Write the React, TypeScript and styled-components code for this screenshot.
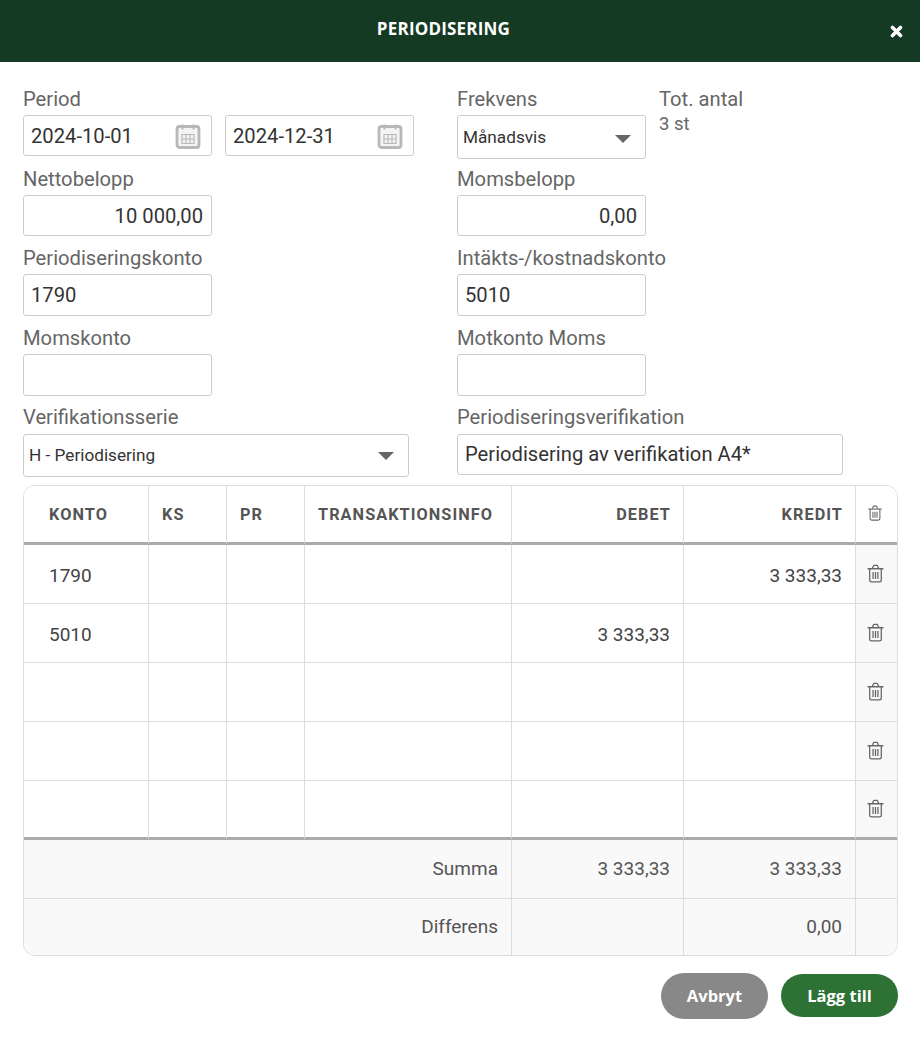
import React from "react";
import styled, { createGlobalStyle } from "styled-components";

const Global = createGlobalStyle`
  html, body { margin: 0; padding: 0; background: #fff; }
  body { font-family: Roboto, "Liberation Sans", sans-serif; color: #333; }
  * { box-sizing: border-box; }
`;

const Page = styled.div`
  width: 920px;
  height: 1049px;
  background: #fff;
  overflow: hidden;
`;

const Header = styled.header`
  position: relative;
  height: 62px;
  background: #153a24;
  display: flex;
  align-items: center;
  justify-content: center;
  padding: 0 33px 4px 0;
`;

const Title = styled.h1`
  margin: 0;
  font: 700 17px/20px "Open Sans", sans-serif;
  letter-spacing: 0.2px;
  color: #fff;
`;

const CloseIcon = styled.svg`
  position: absolute;
  left: 890px;
  top: 25px;
  width: 13px;
  height: 13px;
`;

const Form = styled.div`
  display: grid;
  grid-template-columns: 434px 441px;
  grid-template-rows: 80px 79px 80px 80px 79px;
  padding: 26px 0 0 23px;
  height: 423px;
`;

const Field = styled.div`
  display: flex;
  flex-direction: column;
`;

const FieldRow = styled.div`
  display: flex;
  gap: 13px;
`;

const Label = styled.label<{ $tight?: boolean }>`
  display: block;
  font-size: 20.2px;
  line-height: ${(p) => (p.$tight ? 20 : 22)}px;
  height: 27px;
  color: #666;
`;

const InputBox = styled.div<{ $w?: number; $right?: boolean; $h?: number; $lift?: boolean }>`
  width: ${(p) => p.$w ?? 189}px;
  height: ${(p) => p.$h ?? 41}px;
  border: 1px solid #ccc;
  border-radius: 3px;
  background: #fff;
  display: flex;
  align-items: center;
  justify-content: ${(p) => (p.$right ? "flex-end" : "space-between")};
  padding: 0 8px ${(p) => (p.$lift ? 2 : 0)}px 7px;
  font-size: 20.2px;
  color: #333;
  flex: none;
`;

const SelectBox = styled(InputBox)`
  font-size: 17.2px;
  padding: 0 13px ${(p) => (p.$lift ? 2 : 0)}px 5px;
  color: #333;
`;

const Caret = styled.span`
  width: 0;
  height: 0;
  border-left: 8px solid transparent;
  border-right: 8px solid transparent;
  border-top: 8px solid #666;
  margin-top: 3px;
  margin-right: 1px;
`;

const Count = styled.div`
  font-size: 18.5px;
  line-height: 20px;
  color: #666;
  margin-top: -1px;
`;

const CalendarIcon = styled.svg`
  width: 26px;
  height: 26px;
  margin-right: 2px;
  flex: none;
`;

const TableWrap = styled.div`
  width: 875px;
  height: 471px;
  margin-left: 23px;
  border: 1px solid #ddd;
  border-radius: 12px;
  overflow: hidden;
`;

const Table = styled.table`
  width: 873px;
  table-layout: fixed;
  border-collapse: separate;
  border-spacing: 0;
  color: #444;
  font-size: 19px;
`;

const HeadCell = styled.th<{ $right?: boolean; $pl?: number }>`
  height: 59px;
  border-right: 1px solid #ddd;
  border-bottom: 3px solid #aaa;
  padding: 0 ${(p) => (p.$right ? 12 : 13)}px 0 ${(p) => p.$pl ?? 13}px;
  text-align: ${(p) => (p.$right ? "right" : "left")};
  font-size: 16.3px;
  font-weight: 700;
  letter-spacing: 1.05px;
  color: #555;
  background: #fff;
  &:last-child { border-right: 0; padding: 0 4px 4px 0; text-align: center; }
`;

const Cell = styled.td<{ $right?: boolean; $pl?: number; $thick?: boolean }>`
  height: 59px;
  border-right: 1px solid #ddd;
  border-bottom: ${(p) => (p.$thick ? "3px solid #aaa" : "1px solid #ddd")};
  padding: 2px 13px 0 ${(p) => p.$pl ?? 13}px;
  text-align: ${(p) => (p.$right ? "right" : "left")};
  color: #444;
`;

const IconCell = styled(Cell)`
  background: #f8f8f8;
  border-right: 0;
  padding: 0 3px 4px 0;
  text-align: center;
`;

const SumCell = styled.td<{ $right?: boolean; $last?: boolean }>`
  height: ${(p) => (p.$last ? 56 : 59)}px;
  background: #f9f9f9;
  border-right: 1px solid #ddd;
  border-bottom: ${(p) => (p.$last ? "0" : "1px solid #ddd")};
  padding: 0 13px 2px;
  text-align: right;
  color: #555;
  &:last-child { border-right: 0; }
`;

const TrashSvg = styled.svg<{ $size: number }>`
  display: inline-block;
  vertical-align: middle;
  width: ${(p) => p.$size}px;
  height: ${(p) => p.$size}px;
`;

const Footer = styled.div`
  display: flex;
  justify-content: flex-end;
  align-items: flex-start;
  gap: 13px;
  width: 898px;
  margin-top: 17px;
`;

const Button = styled.button<{ $primary?: boolean }>`
  border: 0;
  border-radius: 24px;
  width: ${(p) => (p.$primary ? 117 : 107)}px;
  height: ${(p) => (p.$primary ? 43 : 46)}px;
  margin-top: ${(p) => (p.$primary ? 1 : 0)}px;
  background: ${(p) => (p.$primary ? "#2d7135" : "#888")};
  color: #fff;
  font: 700 16.5px/20px "Open Sans", sans-serif;
  padding: 0;
`;

const Trash = ({ size = 19 }: { size?: number }) => (
  <TrashSvg $size={size} viewBox="0 0 18 18" fill="none" stroke="#666" strokeWidth="1.2">
    <path d="M1.5 4.5h15" strokeWidth="1.4" />
    <path d="M6 4.2 7 1.8q.2-.5.8-.5h2.4q.6 0 .8.5l1 2.4" />
    <path d="M3.5 4.5v10.7q0 1.8 1.8 1.8h7.4q1.8 0 1.8-1.8V4.5" />
    <path d="M6.7 7.5v6.8M9 7.5v6.8M11.3 7.5v6.8" />
  </TrashSvg>
);

const Calendar = () => (
  <CalendarIcon viewBox="0 0 26 26">
    <rect x="2" y="3.5" width="22" height="21" rx="2.5" fill="#f4f4f4" stroke="#b8b8b8" strokeWidth="2.8" />
    <path d="M7.5 1.5v5M18.5 1.5v5" stroke="#b8b8b8" strokeWidth="2" />
    <path d="M7 11.5h12v9H7zM11 11.5v9M15 11.5v9M7 16h12" fill="none" stroke="#b8b8b8" strokeWidth="1.2" />
  </CalendarIcon>
);

const rows = [
  ["1790", "", "3 333,33"],
  ["5010", "3 333,33", ""],
  ["", "", ""],
  ["", "", ""],
  ["", "", ""],
];

export default function App() {
  return (
    <Page>
      <Global />
      <Header>
        <Title>PERIODISERING</Title>
        <CloseIcon viewBox="0 0 13 13">
          <path d="M2.5 2.5l8 8M10.5 2.5l-8 8" stroke="#fff" strokeWidth="3.6" strokeLinecap="round" />
        </CloseIcon>
      </Header>
      <Form>
        <Field>
          <Label>Period</Label>
          <FieldRow>
            <InputBox>2024-10-01<Calendar /></InputBox>
            <InputBox>2024-12-31<Calendar /></InputBox>
          </FieldRow>
        </Field>
        <FieldRow>
          <Field>
            <Label>Frekvens</Label>
            <SelectBox $h={44}>Månadsvis<Caret /></SelectBox>
          </Field>
          <Field>
            <Label>Tot. antal</Label>
            <Count>3 st</Count>
          </Field>
        </FieldRow>
        <Field>
          <Label>Nettobelopp</Label>
          <InputBox $right>10 000,00</InputBox>
        </Field>
        <Field>
          <Label>Momsbelopp</Label>
          <InputBox $right>0,00</InputBox>
        </Field>
        <Field>
          <Label>Periodiseringskonto</Label>
          <InputBox $h={42}>1790</InputBox>
        </Field>
        <Field>
          <Label>Intäkts-/kostnadskonto</Label>
          <InputBox $h={42}>5010</InputBox>
        </Field>
        <Field>
          <Label>Momskonto</Label>
          <InputBox $h={42} />
        </Field>
        <Field>
          <Label>Motkonto Moms</Label>
          <InputBox $h={42} />
        </Field>
        <Field>
          <Label $tight>Verifikationsserie</Label>
          <SelectBox $w={386} $h={43} $lift>H - Periodisering<Caret /></SelectBox>
        </Field>
        <Field>
          <Label $tight>Periodiseringsverifikation</Label>
          <InputBox $w={386} $lift>Periodisering av verifikation A4*</InputBox>
        </Field>
      </Form>
      <TableWrap>
        <Table>
          <colgroup>
            <col width={125} />
            <col width={78} />
            <col width={78} />
            <col width={207} />
            <col width={172} />
            <col width={172} />
            <col width={41} />
          </colgroup>
          <thead>
            <tr>
              <HeadCell $pl={25}>KONTO</HeadCell>
              <HeadCell>KS</HeadCell>
              <HeadCell>PR</HeadCell>
              <HeadCell>TRANSAKTIONSINFO</HeadCell>
              <HeadCell $right>DEBET</HeadCell>
              <HeadCell $right>KREDIT</HeadCell>
              <HeadCell><Trash size={16} /></HeadCell>
            </tr>
          </thead>
          <tbody>
            {rows.map((r, i) => {
              const thick = i === rows.length - 1;
              return (
                <tr key={i}>
                  <Cell $pl={25} $thick={thick}>{r[0]}</Cell>
                  <Cell $thick={thick} />
                  <Cell $thick={thick} />
                  <Cell $thick={thick} />
                  <Cell $right $thick={thick}>{r[1]}</Cell>
                  <Cell $right $thick={thick}>{r[2]}</Cell>
                  <IconCell $thick={thick}><Trash /></IconCell>
                </tr>
              );
            })}
            <tr>
              <SumCell colSpan={4}>Summa</SumCell>
              <SumCell>3 333,33</SumCell>
              <SumCell>3 333,33</SumCell>
              <SumCell />
            </tr>
            <tr>
              <SumCell $last colSpan={4}>Differens</SumCell>
              <SumCell $last />
              <SumCell $last>0,00</SumCell>
              <SumCell $last />
            </tr>
          </tbody>
        </Table>
      </TableWrap>
      <Footer>
        <Button>Avbryt</Button>
        <Button $primary>Lägg till</Button>
      </Footer>
    </Page>
  );
}
